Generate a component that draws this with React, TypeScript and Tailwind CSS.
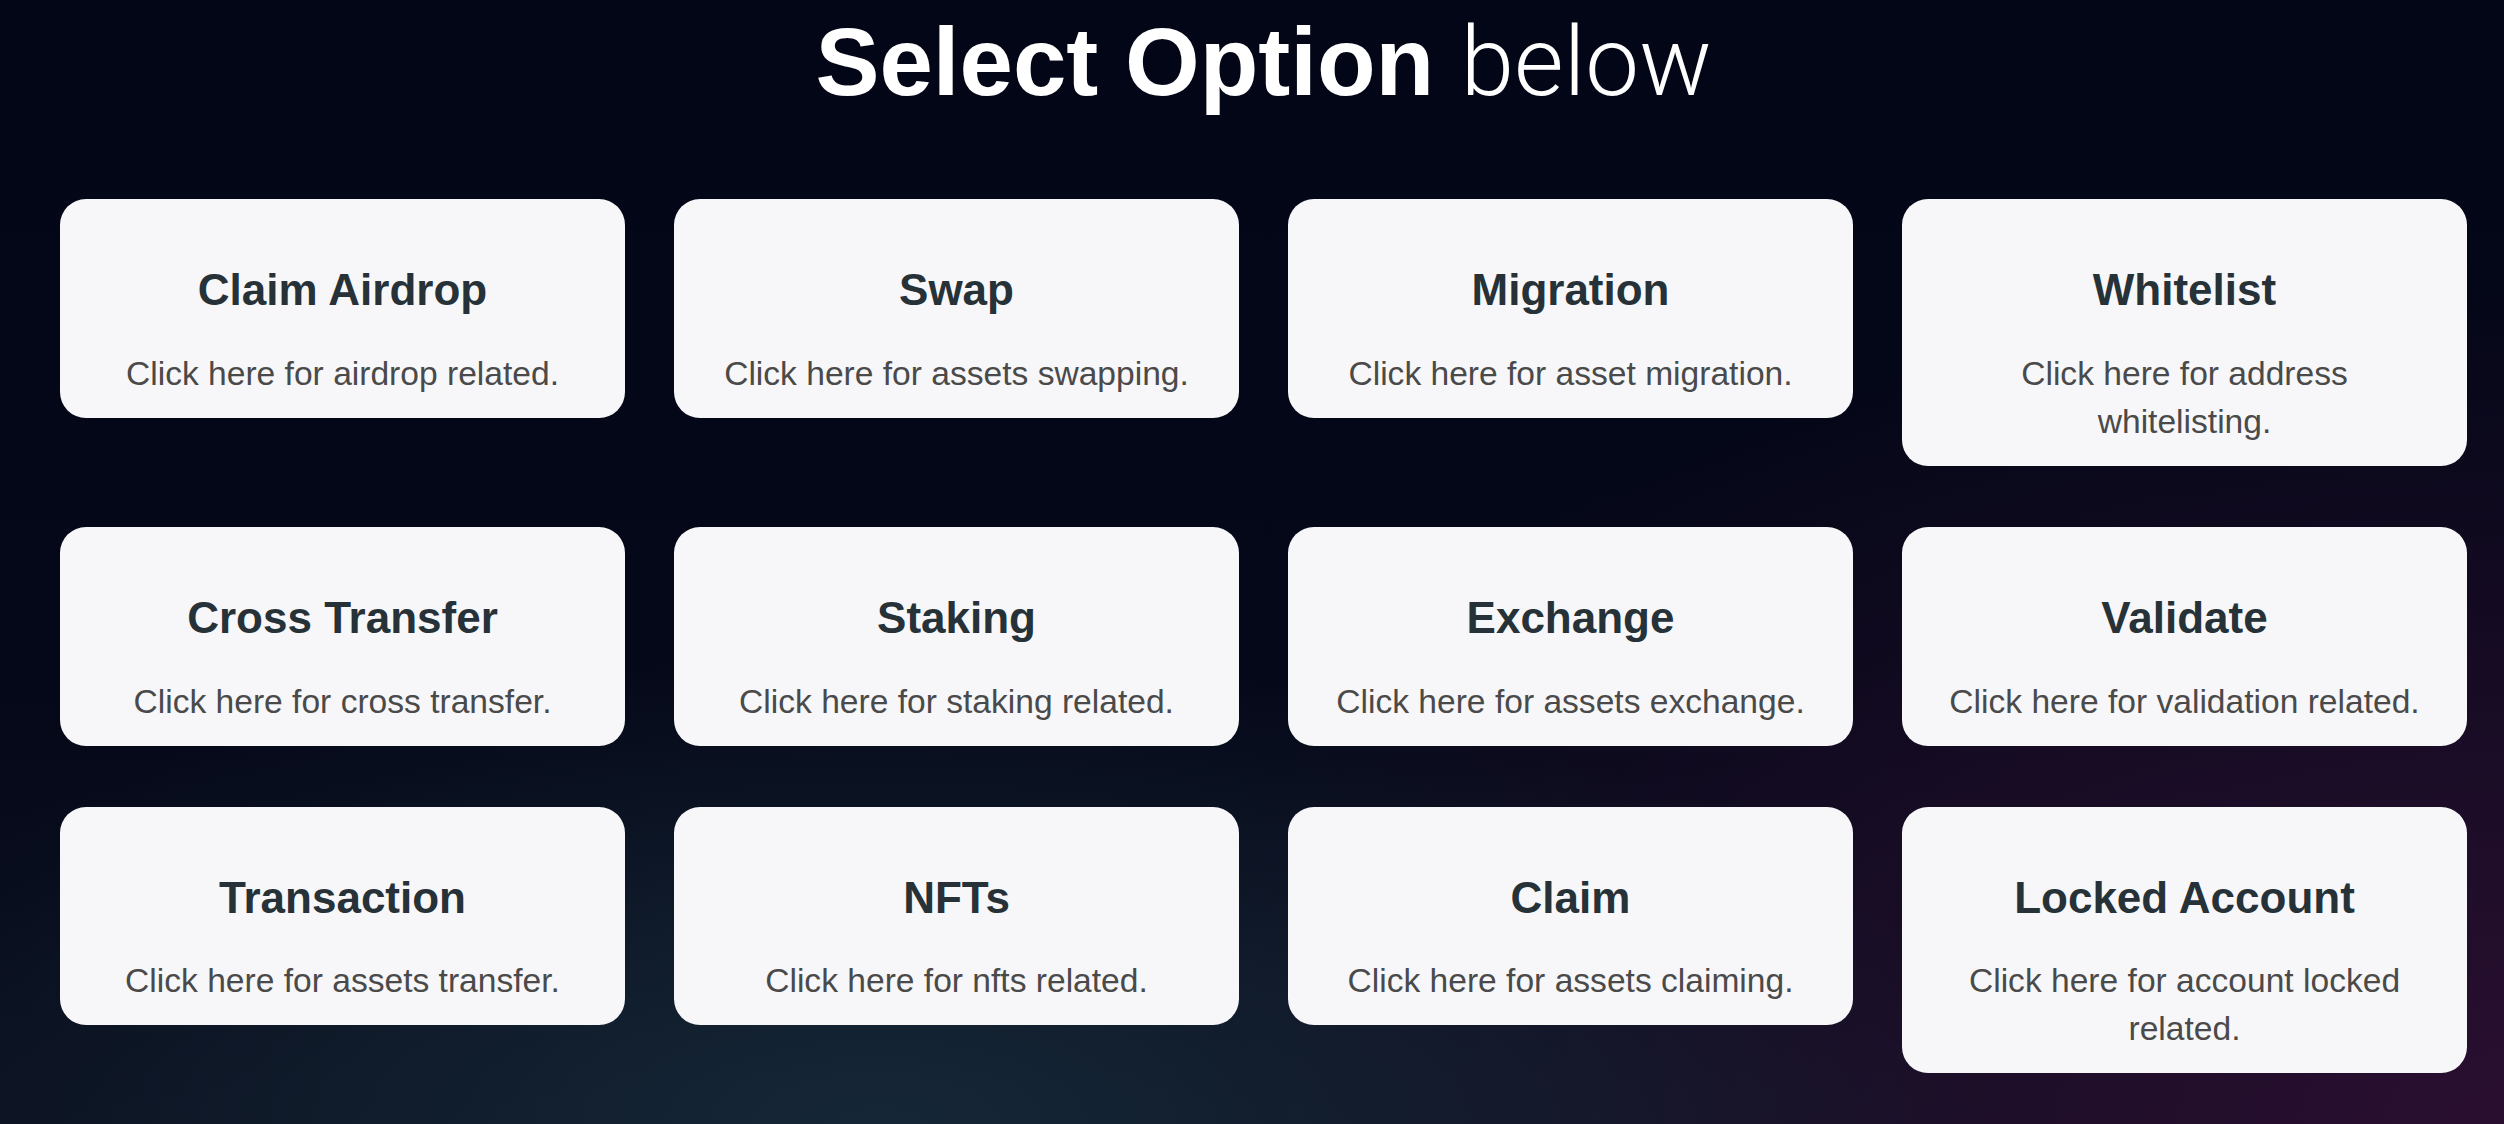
import React from "react";

const options = [
  { title: "Claim Airdrop", desc: "Click here for airdrop related." },
  { title: "Swap", desc: "Click here for assets swapping." },
  { title: "Migration", desc: "Click here for asset migration." },
  { title: "Whitelist", desc: "Click here for address whitelisting." },
  { title: "Cross Transfer", desc: "Click here for cross transfer." },
  { title: "Staking", desc: "Click here for staking related." },
  { title: "Exchange", desc: "Click here for assets exchange." },
  { title: "Validate", desc: "Click here for validation related." },
  { title: "Transaction", desc: "Click here for assets transfer." },
  { title: "NFTs", desc: "Click here for nfts related." },
  { title: "Claim", desc: "Click here for assets claiming." },
  { title: "Locked Account", desc: "Click here for account locked related." },
];

export default function App() {
  return (
    <div className="min-h-screen w-full bg-[#040617] bg-[radial-gradient(ellipse_45%_42%_at_35%_100%,rgba(22,40,56,0.95)_0%,rgba(22,40,56,0)_100%),radial-gradient(ellipse_55%_75%_at_100%_100%,rgba(42,14,48,1)_0%,rgba(42,14,48,0)_100%),linear-gradient(180deg,#030617_0%,#050818_60%,#0a0f1e_100%)] font-['Liberation_Sans',Arial,sans-serif]">
      <div className="pl-[60px] pr-[37px] pt-[14px] pb-[40px]">
        <h1 className="text-center text-white text-[96px] leading-[96px] mb-[89px]">
          <span className="font-bold">Select Option</span>{" "}
          <span className="font-light font-['Roboto',sans-serif]">below</span>
        </h1>
        <div className="grid grid-cols-4 gap-x-[49px] gap-y-[61px] items-start">
          {options.map((o) => (
            <button
              key={o.title}
              type="button"
              className="bg-[#f7f7f9] rounded-[26px] pt-[65px] pb-[20px] px-[36px] text-center flex flex-col items-center"
            >
              <span className="block font-bold text-[#263238] text-[44px] leading-[52.8px]">
                {o.title}
              </span>
              <span className="block mt-[33px] text-[#4a4a4a] text-[33.6px] leading-[48px]">
                {o.desc}
              </span>
            </button>
          ))}
        </div>
      </div>
    </div>
  );
}
